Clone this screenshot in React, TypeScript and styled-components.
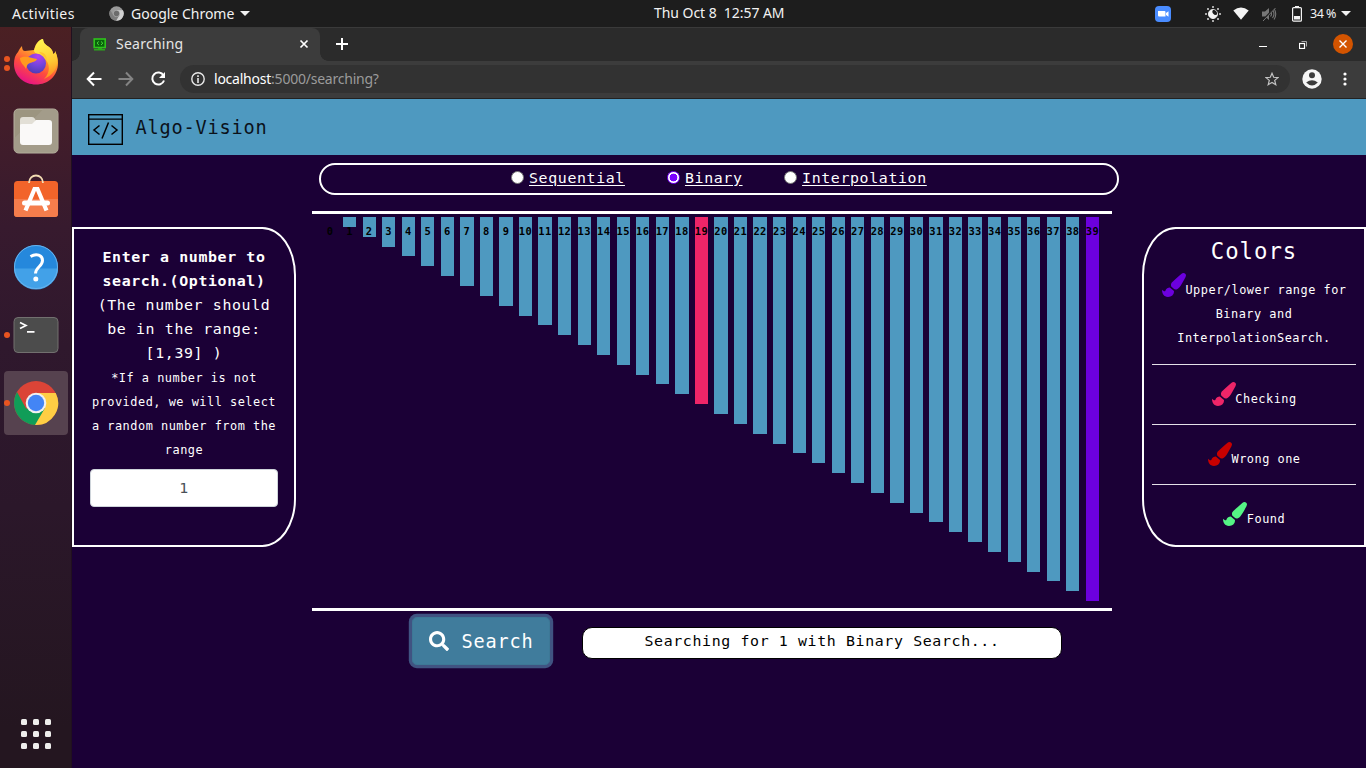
import React from "react";
import styled, { createGlobalStyle, css } from "styled-components";
import { FaPaintBrush, FaSearch } from "react-icons/fa";

const ui = `"Noto Sans", "Open Sans", sans-serif`;
const mono = `"DejaVu Sans Mono", "Liberation Mono", monospace`;

/* Monospace text whose characters advance by 0.6 of the nominal size. */
const code = (size: number) => css`
  font-family: ${mono};
  font-size: ${size * 0.93}px;
  letter-spacing: 0.043em;
`;

const Global = createGlobalStyle`
  *, *::before, *::after { box-sizing: border-box; }
  body { margin: 0; background: #1b0036; overflow: hidden; }
  svg { display: block; flex: none; }
`;

const Desktop = styled.div`
  width: 1366px;
  height: 768px;
  display: flex;
  flex-direction: column;
  font-family: ${ui};
`;

/* ---------- system bar ---------- */

const TopBar = styled.header`
  height: 27px;
  flex: none;
  display: grid;
  grid-template-columns: 654px 131px 1fr;
  align-items: center;
  background: #1d1d1d;
  color: #f2f2f2;
  font-size: 14px;
  line-height: 26px;
`;

const BarGroup = styled.div<{ $end?: boolean }>`
  display: flex;
  align-items: center;
  height: 26px;
  ${(p) => (p.$end ? "justify-content: flex-end; padding-right: 15px;" : "padding-left: 12px;")}
`;

const BarText = styled.span<{ $track?: number; $size?: number; $w?: number }>`
  white-space: pre;
  font-size: ${(p) => p.$size ?? 14}px;
  letter-spacing: ${(p) => p.$track ?? 0}px;
  ${(p) => p.$w && `width: ${p.$w}px;`}
`;

const Clock = styled(BarText)`
  padding-bottom: 1px;
  letter-spacing: -0.05px;
`;

const Caret = styled.i<{ $gap: number }>`
  margin-left: ${(p) => p.$gap}px;
  border: 5px solid transparent;
  border-top-color: #f2f2f2;
  border-bottom: 0;
`;

const Spacer = styled.span<{ $w: number }>`
  flex: none;
  width: ${(p) => p.$w}px;
`;

const Below = styled.div`
  flex: 1;
  display: flex;
  min-height: 0;
`;

/* ---------- dock ---------- */

const Dock = styled.nav`
  width: 72px;
  flex: none;
  display: flex;
  flex-direction: column;
  padding: 4px 4px 9px;
  background: linear-gradient(#4b2023 0, #421d2a 100px, #371a2e 200px, #2f182d 320px, #2b172a 480px, #241620 700px);
  border-right: 1px solid #21101f;
`;

const DockItem = styled.div<{ $active?: boolean }>`
  width: 64px;
  height: 64px;
  margin-bottom: 4px;
  border-radius: 4px;
  display: grid;
  place-items: center;
  position: relative;
  ${(p) => p.$active && css`background: #56424f;`}
`;

const Dots = styled.span`
  position: absolute;
  left: 0;
  top: 0;
  height: 100%;
  display: flex;
  flex-direction: column;
  justify-content: center;
  gap: 3px;
`;

const Dot = styled.i`
  width: 6px;
  height: 6px;
  border-radius: 50%;
  background: #e95420;
`;

const AppGrid = styled.div`
  margin: auto 0 10px 17px;
  display: grid;
  grid-template-columns: repeat(3, 6px);
  gap: 6px;
  i { height: 6px; border-radius: 1.5px; background: #eeeeec; }
`;

/* ---------- browser frame ---------- */

const Browser = styled.main`
  flex: 1;
  display: flex;
  flex-direction: column;
  min-width: 0;
`;

const TabStrip = styled.div`
  height: 34px;
  flex: none;
  display: flex;
  align-items: flex-start;
  background: #2b2b2b;
  border-top: 1px solid #3a3a3a;
  padding-left: 8px;
`;

const Tab = styled.div`
  width: 240px;
  height: 33px;
  display: flex;
  align-items: center;
  border-radius: 8px 8px 0 0;
  background: #3c3c3c;
  color: #e6e6e6;
  padding: 0 11px 1px 13px;
  position: relative;
  &::before, &::after {
    content: "";
    position: absolute;
    bottom: 0;
    width: 8px;
    height: 8px;
  }
  &::before { left: -8px; background: radial-gradient(circle at 0 0, transparent 7.5px, #3c3c3c 8px); }
  &::after { right: -8px; background: radial-gradient(circle at 100% 0, transparent 7.5px, #3c3c3c 8px); }
`;

const TabTitle = styled.span`
  flex: 1;
  margin-left: 9px;
  padding-bottom: 1px;
  font-size: 14px;
  letter-spacing: 0.25px;
`;

const WindowButtons = styled.div`
  margin-left: auto;
  height: 33px;
  display: flex;
  align-items: center;
  padding-right: 13px;
`;

const CloseWindow = styled.span`
  width: 20px;
  height: 20px;
  margin-bottom: 1px;
  border-radius: 50%;
  background: #d35400;
  display: grid;
  place-items: center;
`;

const Toolbar = styled.div`
  height: 38px;
  flex: none;
  display: flex;
  align-items: center;
  background: #3c3c3c;
  border-bottom: 1px solid #222;
  padding: 0 19px 1px 14px;
`;

const Address = styled.div`
  flex: 1;
  height: 28px;
  margin: 0 12px 0 14px;
  padding: 0 11px 0 11px;
  border-radius: 14px;
  display: flex;
  align-items: center;
  background: #323232;
`;

const Url = styled.span`
  flex: 1;
  margin-left: 9px;
  padding-bottom: 1px;
  font-size: 14px;
  letter-spacing: -0.23px;
  color: #9b9b9b;
  b { color: #fff; font-weight: 400; }
`;

/* ---------- page ---------- */

const Page = styled.div`
  flex: 1;
  display: flex;
  flex-direction: column;
  background: #1b0036;
  color: #fff;
  ${code(16)}
  line-height: 24px;
`;

const Brand = styled.div`
  height: 56px;
  flex: none;
  display: flex;
  align-items: center;
  padding: 4px 16px 0;
  gap: 12.5px;
  background: #4e99c0;
  color: #0b121a;
  ${code(20)}
  span { padding-bottom: 2px; }
`;

const Columns = styled.div`
  display: flex;
  justify-content: space-between;
  align-items: flex-start;
`;

const SidePanel = styled.aside<{ $side: "left" | "right" }>`
  width: 224px;
  height: 320px;
  margin-top: 72px;
  border: 2px solid #fff;
  text-align: center;
  ${(p) =>
    p.$side === "left"
      ? css`border-radius: 0 15% 15% 0; padding: 16px;`
      : css`border-radius: 15% 0 0 15%; padding: 8px 8px 7px;`}
`;

const Prompt = styled.p`
  margin: 0;
`;

const Hint = styled.p`
  margin: 0 -4px;
  padding: 1px 0 7px;
  ${code(12.8)}
`;

const NumberField = styled.input`
  width: 100%;
  height: 38px;
  border: 1px solid #ced4da;
  border-radius: 4px;
  background: #fff;
  color: #495057;
  text-align: center;
  ${code(16)}
`;

const PanelTitle = styled.h4`
  margin: 0 0 7px;
  ${code(24)}
  font-weight: 400;
  line-height: 29px;
`;

const Legend = styled.div<{ $color: string }>`
  height: 60px;
  padding-top: 17px;
  ${code(12.8)}
  border-top: 1px solid #e4e0e8;
  svg {
    display: inline-block;
    font-size: 24px;
    margin: 0 -0.5px 0 0.5px;
    vertical-align: -3.5px;
    color: ${(p) => p.$color};
  }
  &:first-of-type { height: 91px; padding-top: 0; border-top: 0; }
`;

const Stage = styled.section`
  width: 807px;
  padding-top: 8px;
  margin-right: 7px;
`;

const ModeBar = styled.div`
  width: 800px;
  height: 32px;
  margin-left: 7px;
  border: 2px solid #fff;
  border-radius: 16px;
  display: flex;
  padding: 0 0 3px 190px;
  align-items: center;
`;

const Mode = styled.label<{ $gap: number }>`
  display: flex;
  align-items: center;
  gap: 5px;
  margin-right: ${(p) => p.$gap}px;
  text-decoration: underline;
  text-underline-offset: 2px;
`;

const Radio = styled.i<{ $on?: boolean }>`
  width: 13px;
  height: 13px;
  border-radius: 50%;
  border: 1px solid ${(p) => (p.$on ? "#7a00ff" : "#767676")};
  background: ${(p) => (p.$on ? "radial-gradient(circle, #7a00ff 3.6px, #fff 4.2px)" : "#fff")};
`;

const Chart = styled.div`
  width: 800px;
  height: 400px;
  margin-top: 16px;
  border-top: 3px solid #fff;
  border-bottom: 3px solid #fff;
  padding: 3px 0 0 11.45px;
  display: flex;
  align-items: flex-start;
  gap: 6.3px;
`;

const Bar = styled.div<{ $n: number; $tone: string }>`
  width: 13.25px;
  flex: none;
  height: ${(p) => p.$n * 9.85}px;
  background: ${(p) => p.$tone};
  display: flex;
  justify-content: center;
  color: #000;
  ${code(11.2)}
  font-weight: bold;
  line-height: 29px;
`;

const Controls = styled.div`
  display: flex;
  align-items: center;
  gap: 32px;
  padding: 6px 0 0 100px;
`;

const SearchButton = styled.button`
  width: 138px;
  height: 48px;
  border: 1px solid #3d7896;
  border-radius: 4.8px;
  box-shadow: 0 0 0 3.2px #405382;
  background: #407c9c;
  color: #fff;
  padding: 0 16px;
  display: flex;
  align-items: center;
  gap: 12.5px;
  ${code(20)}
  svg { font-size: 20px; }
`;

const Status = styled.div`
  width: 480px;
  height: 32px;
  margin-top: 4px;
  padding-top: 1px;
  border: 1px solid #000;
  border-radius: 10px;
  background: #fff;
  color: #000;
  text-align: center;
`;

const FirefoxIcon = () => (
  <svg width="46" height="48" viewBox="0 0 46 48">
    <defs>
      <linearGradient id="fxBody" x1=".8" y1="0" x2=".3" y2="1">
        <stop offset="0" stopColor="#fff44f" />
        <stop offset=".35" stopColor="#ffa52a" />
        <stop offset=".65" stopColor="#ff4e3c" />
        <stop offset="1" stopColor="#e6108a" />
      </linearGradient>
      <radialGradient id="fxGlobe" cx=".6" cy=".15" r=".9">
        <stop offset="0" stopColor="#b83ff0" />
        <stop offset=".5" stopColor="#7545dd" />
        <stop offset="1" stopColor="#4b3bb0" />
      </radialGradient>
      <linearGradient id="fxFlame" x1=".4" y1="0" x2=".6" y2="1">
        <stop offset="0" stopColor="#fff44f" />
        <stop offset=".6" stopColor="#ffc833" />
        <stop offset="1" stopColor="#ff8a1f" />
      </linearGradient>
    </defs>
    <path d="M5 13c1-2 2-4 4-6 0 3 1 5 3 5l9-1C22 6 25 1 30 0c0 3 2 6 6 8 3 2 4 5 4 7 2-1 2-1 2-3 2 4 3 8 3 12C45 37 35 45.500 23 45.500S1 37 1 25c0-5 1-9 4-12z" fill="url(#fxBody)" />
    <path d="M30 0c0 3 2 6 6 8 3 2 4 5 4 7 2-1 2-1 2-3 6 12 0 24-11 28 7-7 6-16 0-21-4-3-9-4-10-7 1-5 4-11 9-12z" fill="url(#fxFlame)" />
    <circle cx="23" cy="24.500" r="10" fill="url(#fxGlobe)" />
    <path d="M7 19c5-3 12 0 17 1-1 3-5 3-7 4-3 1-3 3-4 6-2-4-6-6-6-11z" fill="#ff9a1f" />
    <path d="M26 13c6 0 8 4 8 9-2-4-5-6-8-9z" fill="#ffc52e" />
  </svg>
);

const FilesIcon = () => (
  <svg width="46" height="46" viewBox="0 0 46 46">
    <rect x="1" y="1" width="44" height="44" rx="4.500" fill="#9c9580" stroke="#b8b2a2" />
    <path d="M1.500 40V30L30 1.500h11a3.500 3.500 0 0 1 3.500 3.500v36a3 3 0 0 1-3 3h-37a3 3 0 0 1-3-3z" fill="#a39c8a" />
    <path d="M7 12a3 3 0 0 1 3-3h9q2 0 3 2l1 2H37v6H7z" fill="#e2dfd6" />
    <path d="M7 17q0-1 2-1h10l4-4h13q3 0 3 3v19a3 3 0 0 1-3 3H10a3 3 0 0 1-3-3z" fill="#faf9f8" />
  </svg>
);

const SoftwareIcon = () => (
  <svg width="46" height="52" viewBox="0 0 46 52">
    <rect x="1" y="8" width="44" height="36" rx="3.500" fill="#f2642a" />
    <path d="M1 26h44v15a3 3 0 0 1-3 3H4a3 3 0 0 1-3-3z" fill="#f57d4c" />
    <path d="M16 10C16 0 30 0 30 10" fill="none" stroke="#f3dcb2" strokeWidth="1.800" />
    <path d="M12.500 37.500L21.500 16h3l9 21.500" fill="none" stroke="#fff" strokeWidth="4.200" />
    <rect x="9" y="27.500" width="28" height="5" rx="2.500" fill="#fff" />
  </svg>
);

const HelpIcon = () => (
  <svg width="46" height="46" viewBox="0 0 46 46">
    <circle cx="23" cy="23" r="22" fill="#2588dc" />
    <path d="M1 24.500h44a22 21 0 0 1-44 0z" fill="#42a1e8" />
    <circle cx="23" cy="23" r="21.500" fill="none" stroke="#68b3ec" />
    <path d="M17.500 12.500c6-3.500 12-1.300 12 4 0 6-7 6.500-7 13" fill="none" stroke="#fff" strokeWidth="3" />
    <circle cx="22.800" cy="35" r="2.500" fill="#fff" />
  </svg>
);

const TerminalIcon = () => (
  <svg width="46" height="38" viewBox="0 0 46 38">
    <rect x="1" y="1.500" width="44" height="35" rx="4" fill="#4c4c4c" stroke="#72706f" />
    <path d="M7 6.500l6 3-6 3M14 15.800h7.500" fill="none" stroke="#fff" strokeWidth="1.700" />
  </svg>
);

const ChromeIcon = ({ size, gray }: { size: number; gray?: boolean }) => (
  <svg width={size} height={size} viewBox="0 0 46 46">
    <circle cx="23" cy="23" r="22" fill={gray ? "#999" : "#db4437"} />
    <path d="M4 12a22 22 0 0 0 18.500 33L33 28.500 13 28.500z" fill={gray ? "#7d7d7d" : "#109d58"} />
    <path d="M23 13h19.700A22 22 0 0 1 22 45l10-17z" fill={gray ? "#d0d0d0" : "#ffce44"} />
    <circle cx="23" cy="23" r="10.300" fill={gray ? "#aaa" : "#f1f1f1"} />
    <circle cx="23" cy="23" r="8.200" fill={gray ? "#6c6c6c" : "#4385f5"} />
  </svg>
);

const ZoomIcon = () => (
  <svg width="16" height="16" viewBox="0 0 16 16">
    <rect width="16" height="16" rx="4" fill="#4a8cff" />
    <path d="M3 5h6.500q1 0 1 1v4.500H4q-1 0-1-1zM11 7l2.500-1.800v5.600L11 9z" fill="#fff" />
  </svg>
);

const NightIcon = () => (
  <svg width="16" height="16" viewBox="0 0 16 16">
    <circle cx="8" cy="8" r="4.600" fill="none" stroke="#c8c8c8" strokeWidth="1" />
    <path d="M8.500 3.500a3 3 0 0 0 4 4.500 4.600 4.600 0 1 1-4-4.500z" fill="#f4f4f4" />
    <g fill="#a8a8a8">
      <rect x="7" y="0" width="2" height="2" /><rect x="7" y="14" width="2" height="2" />
      <rect x="0" y="7" width="2" height="2" /><rect x="14" y="7" width="2" height="2" />
      <rect x="2" y="2" width="2" height="2" /><rect x="12" y="2" width="2" height="2" />
      <rect x="2" y="12" width="2" height="2" /><rect x="12" y="12" width="2" height="2" />
    </g>
  </svg>
);

const WifiIcon = () => (
  <svg width="16" height="13" viewBox="0 0 16 13">
    <path d="M.3 3.500Q8-2.700 15.700 3.500L8 12.700z" fill="#f4f4f4" />
  </svg>
);

const MutedIcon = () => (
  <svg width="16" height="16" viewBox="0 0 16 16">
    <path d="M1 5.500h3L8 2v12l-4-3.500H1z" fill="#777" />
    <path d="M9.500 5.500q2 2.500 0 5M11.500 4q3 4 0 8M13 2.500q3.500 5.500 0 11" fill="none" stroke="#777" strokeWidth="1.100" />
    <path d="M1.500 14.500L14 1.500" stroke="#1d1d1d" strokeWidth="1.600" />
    <path d="M2 15L14.500 2" stroke="#777" strokeWidth="1" />
  </svg>
);

const BatteryIcon = () => (
  <svg width="10" height="16" viewBox="0 0 10 16">
    <path d="M3 0h4v1.500H3z" fill="#f2f2f2" />
    <rect x=".6" y="1.600" width="8.800" height="13.600" rx="1" fill="none" stroke="#f2f2f2" strokeWidth="1.200" />
    <path d="M2 10h6v3.500H2z" fill="#f2f2f2" />
  </svg>
);

const Favicon = () => (
  <svg width="14" height="13" viewBox="0 0 14 13">
    <rect x="1.200" y="1" width="11" height="8.500" fill="#09620c" stroke="#2fc31c" strokeWidth="1.600" />
    <path d="M5.800 3.500L4 5.200l1.800 1.700M8 3.500l1.800 1.700L8 6.900" fill="none" stroke="#4ee23c" strokeWidth="1" />
    <path d="M5 10h4v1h3v1.500H1V11h4z" fill="#2aa81b" />
  </svg>
);

const BrandIcon = () => (
  <svg width="35" height="31" viewBox="0 0 35 31" fill="none" stroke="#000">
    <rect x=".7" y=".7" width="33.600" height="29.600" strokeWidth="1.400" />
    <path d="M0 5.200h35" strokeWidth="1.300" />
    <path d="M11.500 11.500L6 16l5.500 4.500M23.500 11.500L29 16l-5.500 4.500M20.500 8.500l-6.500 16" strokeWidth="1.500" />
  </svg>
);

const Stroke = ({ w, h, d, color = "#fff", sw = 2 }: { w: number; h: number; d: string; color?: string; sw?: number }) => (
  <svg width={w} height={h} viewBox={`0 0 ${w} ${h}`} fill="none" stroke={color} strokeWidth={sw}>
    <path d={d} />
  </svg>
);

const numbers = Array.from({ length: 40 }, (_, i) => i);
const toneOf = (n: number) => (n === 19 ? "#ee2568" : n === 39 ? "#6c00de" : "#4e99c0");

const legend = [
  { color: "#6c00de", label: "Upper/lower range for Binary and InterpolationSearch." },
  { color: "#ee2568", label: "Checking" },
  { color: "#c80000", label: "Wrong one" },
  { color: "#55f585", label: "Found" },
];

export default function App() {
  return (
    <Desktop>
      <Global />
      <TopBar>
        <BarGroup>
          <BarText $w={97} $track={0.45}>Activities</BarText>
          <ChromeIcon size={15} gray />
          <Spacer $w={7} />
          <BarText>Google Chrome</BarText>
          <Caret $gap={6} />
        </BarGroup>
        <Clock>Thu Oct 8  12:57 AM</Clock>
        <BarGroup $end>
          <ZoomIcon />
          <Spacer $w={34} />
          <NightIcon />
          <Spacer $w={12} />
          <WifiIcon />
          <Spacer $w={12} />
          <MutedIcon />
          <Spacer $w={15} />
          <BatteryIcon />
          <Spacer $w={8} />
          <BarText $size={12.5} $track={-0.5}>34 %</BarText>
          <Caret $gap={5} />
        </BarGroup>
      </TopBar>
      <Below>
        <Dock>
          <DockItem><Dots><Dot /><Dot /></Dots><FirefoxIcon /></DockItem>
          <DockItem><FilesIcon /></DockItem>
          <DockItem><SoftwareIcon /></DockItem>
          <DockItem><HelpIcon /></DockItem>
          <DockItem><Dots><Dot /></Dots><TerminalIcon /></DockItem>
          <DockItem $active><Dots><Dot /></Dots><ChromeIcon size={46} /></DockItem>
          <AppGrid>{numbers.slice(0, 9).map((n) => <i key={n} />)}</AppGrid>
        </Dock>
        <Browser>
          <TabStrip>
            <Tab>
              <Favicon />
              <TabTitle>Searching</TabTitle>
              <Stroke w={10} h={10} d="M1.500 1.500l7 7M8.500 1.500l-7 7" sw={1.7} />
            </Tab>
            <Spacer $w={16} />
            <Stroke w={12} h={32} d="M6 10v12M0 16h12" />
            <WindowButtons>
              <Stroke w={8} h={6} d="M0 4.500h8" sw={1} />
              <Spacer $w={32} />
              <svg width="8" height="8" viewBox="0 0 8 8" fill="none">
                <path d="M2.500.5h5v5" stroke="#aaa" />
                <rect x=".5" y="2.500" width="5" height="5" stroke="#fff" strokeWidth="1.200" />
              </svg>
              <Spacer $w={26} />
              <CloseWindow><Stroke w={8} h={8} d="M.5.5l7 7M7.500.5l-7 7" sw={1.4} /></CloseWindow>
            </WindowButtons>
          </TabStrip>
          <Toolbar>
            <Stroke w={16} h={16} d="M8 1.500L1.700 8 8 14.500M2 8h13.500" />
            <Spacer $w={16} />
            <Stroke w={16} h={16} d="M8 1.500L14.300 8 8 14.500M14 8H.5" color="#848484" />
            <Spacer $w={16} />
            <svg width="16" height="16" viewBox="0 0 16 16" fill="none">
              <path d="M13.500 4.500A6 6 0 1 0 14 9.500" stroke="#fff" strokeWidth="2" />
              <path d="M15 1v6H9z" fill="#fff" />
            </svg>
            <Address>
              <svg width="14" height="14" viewBox="0 0 14 14" fill="none" stroke="#e8e8e8">
                <circle cx="7" cy="7" r="6.200" strokeWidth="1.400" />
                <path d="M7 3.200v1.700M7 6v5" strokeWidth="1.600" />
              </svg>
              <Url><b>localhost</b>:5000/searching?</Url>
              <Stroke w={14} h={14} d="M7 1.300l1.700 4 4.300.3-3.300 2.800 1.100 4.300L7 10.400l-3.800 2.300 1.100-4.300L1 5.600l4.300-.3z" color="#c4c4c4" sw={1.2} />
            </Address>
            <svg width="20" height="20" viewBox="0 0 20 20">
              <circle cx="10" cy="10" r="9.700" fill="#f6f6f6" />
              <circle cx="10" cy="6.300" r="3" fill="#3c3c3c" />
              <path d="M4.200 13.500q5.800-4.500 11.600 0-5.800 6-11.600 0z" fill="#3c3c3c" />
            </svg>
            <Spacer $w={21} />
            <svg width="4" height="14" viewBox="0 0 4 14" fill="#fff">
              <circle cx="2" cy="2" r="1.600" /><circle cx="2" cy="7" r="1.600" /><circle cx="2" cy="12" r="1.600" />
            </svg>
          </Toolbar>
          <Page>
            <Brand><BrandIcon /><span>Algo-Vision</span></Brand>
            <Columns>
              <SidePanel $side="left">
                <Prompt>
                  <b>Enter a number to search.(Optional)</b>
                  <br />(The number should be in the range: [1,39] )
                </Prompt>
                <Hint>*If a number is not provided, we will select a random number from the range</Hint>
                <NumberField defaultValue="1" />
              </SidePanel>
              <Stage>
                <ModeBar>
                  <Mode $gap={42}><Radio />Sequential</Mode>
                  <Mode $gap={41.5}><Radio $on />Binary</Mode>
                  <Mode $gap={0}><Radio />Interpolation</Mode>
                </ModeBar>
                <Chart>
                  {numbers.map((n) => <Bar key={n} $n={n} $tone={toneOf(n)}>{n}</Bar>)}
                </Chart>
                <Controls>
                  <SearchButton><FaSearch /><span>Search</span></SearchButton>
                  <Status>Searching for 1 with Binary Search...</Status>
                </Controls>
              </Stage>
              <SidePanel $side="right">
                <PanelTitle>Colors</PanelTitle>
                {legend.map((l) => (
                  <Legend key={l.label} $color={l.color}><FaPaintBrush />{l.label}</Legend>
                ))}
              </SidePanel>
            </Columns>
          </Page>
        </Browser>
      </Below>
    </Desktop>
  );
}
